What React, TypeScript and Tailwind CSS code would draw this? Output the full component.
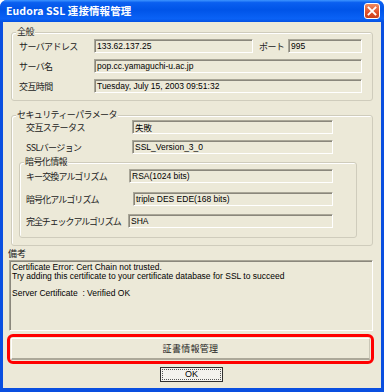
import React from 'react';

const JP = "font-['Noto_Sans_CJK_JP',sans-serif]";
const LAT = "font-['Liberation_Sans','Noto_Sans_CJK_JP',sans-serif]";

interface FieldProps {
  value: string;
  className: string;
}

const Field: React.FC<FieldProps> = ({ value, className }) => (
  <div
    className={`h-[14px] shrink-0 bg-[#ece9d8] border border-t-[#a9a697] border-l-[#a9a697] border-b-white border-r-white shadow-[inset_1px_1px_0_#8a877c] pl-[2px] flex items-center text-[8.5px] leading-none text-black whitespace-nowrap overflow-hidden ${LAT} ${className}`}
  >
    {value}
  </div>
);

const Label: React.FC<{ text: string; className: string }> = ({ text, className }) => (
  <div className={`shrink-0 text-[9px] leading-none text-[#222] whitespace-nowrap ${JP} ${className}`}>{text}</div>
);

const GroupTitle: React.FC<{ text: string }> = ({ text }) => (
  <span
    className={`absolute -top-[7px] left-[4px] bg-[#ece9d8] px-[1px] text-[9px] leading-[12px] text-[#222] tracking-[-0.6px] ${JP}`}
  >
    {text}
  </span>
);

export default function App() {
  return (
    <div className="w-[384px] h-[392px] bg-[#0a4fe0] rounded-t-[7px] flex flex-col overflow-hidden">
      {/* title bar */}
      <div className="h-[22px] shrink-0 flex items-center justify-between pl-[6px] pr-[4px] bg-[linear-gradient(to_bottom,#3d95ff_0%,#0a5ff0_12%,#0054e8_45%,#0a62f6_85%,#0450e2_100%)]">
        <span className={`text-white font-bold text-[10.5px] tracking-[0.1px] ${JP}`}>Eudora SSL 連接情報管理</span>
        <div className="w-[16px] h-[16px] rounded-[3px] border border-white bg-[linear-gradient(to_bottom,#f08a5f,#e0502a_60%,#c9401c)] flex items-center justify-center">
          <svg width="10" height="10" viewBox="0 0 10 10">
            <path d="M1.5 1.5 L8.5 8.5 M8.5 1.5 L1.5 8.5" stroke="white" strokeWidth="1.8" strokeLinecap="square" />
          </svg>
        </div>
      </div>

      {/* client area */}
      <div className="flex-1 mx-[3px] mb-[4px] bg-[#ece9d8] flex flex-col">
        {/* 全般 */}
        <div className="relative mt-[10px] ml-[8px] w-[362px] h-[69px] shrink-0 border border-[#cfccbc] rounded-[3px] shadow-[inset_1px_1px_0_#fff] pt-[6px] pl-[7px] flex flex-col gap-[6px]">
          <GroupTitle text="全般" />
          <div className="flex items-center">
            <Label text="サーバアドレス" className="w-[75px] tracking-[-0.6px]" />
            <Field value="133.62.137.25" className="w-[159px]" />
            <Label text="ポート" className="ml-[6px] w-[29px] tracking-[-0.6px]" />
            <Field value="995" className="w-[74px]" />
          </div>
          <div className="flex items-center">
            <Label text="サーバ名" className="w-[75px] tracking-[-0.6px]" />
            <Field value="pop.cc.yamaguchi-u.ac.jp" className="w-[268px]" />
          </div>
          <div className="flex items-center">
            <Label text="交互時間" className="w-[75px] tracking-[-0.6px]" />
            <Field value="Tuesday, July 15, 2003 09:51:32" className="w-[268px]" />
          </div>
        </div>

        {/* セキュリティーパラメータ */}
        <div className="relative mt-[14px] ml-[8px] w-[362px] h-[131px] shrink-0 border border-[#cfccbc] rounded-[3px] shadow-[inset_1px_1px_0_#fff] pt-[4px] flex flex-col">
          <GroupTitle text="セキュリティーパラメータ" />
          <div className="flex items-center pl-[14px]">
            <Label text="交互ステータス" className="w-[106px] tracking-[-0.6px]" />
            <Field value="失敗" className={`w-[201px] ${JP}`} />
          </div>
          <div className="flex items-center pl-[14px] mt-[6px]">
            <Label text="SSLバージョン" className="w-[106px] tracking-[-0.6px]" />
            <Field value="SSL_Version_3_0" className="w-[201px]" />
          </div>

          {/* 暗号化情報 */}
          <div className="relative mt-[8px] ml-[7px] w-[338px] h-[76px] shrink-0 border border-[#cfccbc] rounded-[3px] shadow-[inset_1px_1px_0_#fff] pt-[6px] pl-[6px] flex flex-col">
            <GroupTitle text="暗号化情報" />
            <div className="flex items-center">
              <Label text="キー交換アルゴリズム" className="w-[103px] tracking-[-0.9px]" />
              <Field value="RSA(1024 bits)" className="w-[204px]" />
            </div>
            <div className="flex items-center mt-[9px]">
              <Label text="暗号化アルゴリズム" className="w-[107px] tracking-[-0.9px]" />
              <Field value="triple DES EDE(168 bits)" className="w-[200px]" />
            </div>
            <div className="flex items-center mt-[8px]">
              <Label text="完全チェックアルゴリズム" className="w-[102px] tracking-[-1.1px]" />
              <Field value="SHA" className="w-[205px]" />
            </div>
          </div>
        </div>

        {/* 備考 */}
        <div className={`ml-[5px] h-[14px] shrink-0 flex items-center text-[9px] leading-none text-[#222] ${JP}`}>備考</div>
        <div
          className={`ml-[6px] w-[364px] h-[71px] shrink-0 bg-[#ece9d8] border border-t-[#a9a697] border-l-[#a9a697] border-b-white border-r-white shadow-[inset_1px_1px_0_#8a877c] pl-[2px] pt-[2px] text-[8.5px] leading-[8.7px] text-black whitespace-pre ${LAT}`}
        >
          {'Certificate Error: Cert Chain not trusted.\nTry adding this certificate to your certificate database for SSL to succeed\n\nServer Certificate  : Verified OK'}
        </div>

        {/* 証書情報管理 */}
        <div className="mt-[3px] ml-[4px] w-[367px] h-[30px] shrink-0 border-[3px] border-[#ff0000] rounded-[6px] p-[1px] flex">
          <button
            className={`flex-1 bg-[#ece9d8] border-t border-l border-t-white border-l-white border-b-[2px] border-r border-b-[#aca899] border-r-[#c9c6b6] text-[9px] text-[#222] tracking-[0.3px] flex items-center justify-center ${JP}`}
          >
            証書情報管理
          </button>
        </div>

        {/* OK */}
        <div className="mt-[3px] flex justify-center">
          <button className="w-[63px] h-[15px] ml-[-1px] bg-[#f4f3ee] border border-[#2f2f2f] p-[1px] flex">
            <span className={`flex-1 border border-dotted border-[#555] flex items-center justify-center text-[9px] leading-none text-black ${LAT}`}>
              OK
            </span>
          </button>
        </div>
      </div>
    </div>
  );
}
